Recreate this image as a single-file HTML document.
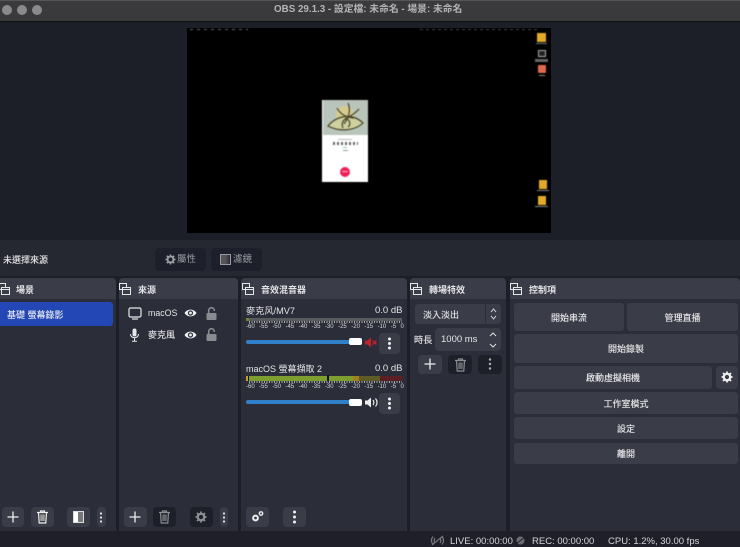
<!DOCTYPE html>
<html><head><meta charset="utf-8">
<style>
*{box-sizing:border-box}
html,body{margin:0;padding:0;width:740px;height:547px;overflow:hidden;background:#1c1e28}
body{position:relative;font-family:"Liberation Sans","Noto Sans CJK TC",sans-serif;color:#e4e4e6}
#w{position:absolute;left:0;top:0;width:740px;height:547px;overflow:hidden;filter:blur(0.35px)}
.a{position:absolute}
.t{position:absolute;white-space:nowrap;line-height:14px}
.m{text-shadow:0 0 .5px #dcdcdf}
.dock{position:absolute;top:278px;height:253px;background:#2b2d38;border-radius:4px 4px 0 0}
.hd{position:absolute;left:0;right:0;top:0;height:21px;background:#3a3c47;border-radius:4px 4px 0 0}
.ht{position:absolute;top:5px;font-size:9px;font-weight:bold;line-height:14px;color:#e2e2e5;white-space:nowrap}
.btn{position:absolute;background:#3a3c47;border-radius:3px;text-align:center;font-size:9px;color:#e4e4e6;text-shadow:0 0 .5px #e4e4e6}
.ib{position:absolute;background:#3a3c47;border-radius:4px}
.ibd{position:absolute;background:#1e2029;border-radius:4px}
svg{position:absolute;display:block;overflow:visible}
.scale{position:absolute;left:246px;width:158px;display:flex;justify-content:space-between;font-size:6px;color:#d8d8da;line-height:8px}
.pv{filter:blur(0.6px)}
</style></head>
<body><div id="w">
<!-- title bar -->
<div class="a" style="left:0;top:0;width:740px;height:21px;background:#3a3a3d;border-top:1px solid #555"></div>
<div class="a" style="left:0;top:21px;width:740px;height:1px;background:#0f1014"></div>
<div class="a" style="left:2px;top:5px;width:10px;height:10px;border-radius:50%;background:#8a8a8c"></div>
<div class="a" style="left:17px;top:5px;width:10px;height:10px;border-radius:50%;background:#8a8a8c"></div>
<div class="a" style="left:32px;top:5px;width:10px;height:10px;border-radius:50%;background:#8a8a8c"></div>
<div class="t" style="left:274px;top:3px;font-size:9.8px;font-weight:bold;color:#b4b4b6">OBS 29.1.3 - 設定檔: 未命名 - 場景: 未命名</div>

<!-- preview -->
<div class="a" style="left:187px;top:28px;width:364px;height:205px;background:#000"></div>
<div class="pv">
<div class="a" style="left:190px;top:29px;width:58px;height:1px;background:repeating-linear-gradient(90deg,#666 0 3px,#000 3px 7px)"></div>
<div class="a" style="left:420px;top:29px;width:118px;height:1px;background:repeating-linear-gradient(90deg,#444 0 3px,#000 3px 6px)"></div>
<div class="a" style="left:537px;top:33px;width:9px;height:9px;background:#e2a92a"></div>
<div class="a" style="left:536px;top:43px;width:11px;height:1px;background:#777"></div>
<div class="a" style="left:538px;top:50px;width:8px;height:7px;border:1px solid #aaa;background:#222"></div>
<div class="a" style="left:535px;top:59px;width:13px;height:3px;background:#666"></div>
<div class="a" style="left:538px;top:65px;width:8px;height:8px;background:#e0684c;border-radius:1px"></div>
<div class="a" style="left:539px;top:75px;width:6px;height:1px;background:#888"></div>
<div class="a" style="left:539px;top:180px;width:8px;height:9px;background:#e2a92a"></div>
<div class="a" style="left:537px;top:190px;width:12px;height:1px;background:#888"></div>
<div class="a" style="left:538px;top:196px;width:8px;height:9px;background:#e2a92a"></div>
<div class="a" style="left:535px;top:206px;width:13px;height:1px;background:#888"></div>
<!-- phone card -->
<div class="a" style="left:322px;top:100px;width:46px;height:82px;background:#fff"></div>
<div class="a" style="left:323px;top:100px;width:45px;height:35px;background:#b9c5ba"></div>
<svg style="left:323px;top:100px" width="45" height="35" viewBox="0 0 45 35">
<ellipse cx="22" cy="15" rx="9" ry="9" fill="#d4cb8f"/>
<path d="M5 26C14 15 30 13 40 23C32 31 16 32 5 26Z" fill="#cfd0a0" stroke="#47452a" stroke-width="1.2"/>
<path d="M25 3C28 10 26 17 21 24M14 8C17 14 24 18 31 18M36 9C32 14 27 16 22 19M20 28C18 24 20 19 24 19C28 21 27 26 25 27" fill="none" stroke="#47452a" stroke-width="1.2"/>
</svg>
<div class="a" style="left:338px;top:139px;width:14px;height:1px;background:#bbb"></div>
<div class="a" style="left:333px;top:142px;width:25px;height:3px;background:repeating-linear-gradient(90deg,#666 0 2px,#fff 2px 4px)"></div>
<div class="a" style="left:343px;top:147px;width:4px;height:1px;background:#8cc"></div>
<div class="a" style="left:343px;top:150px;width:5px;height:1px;background:#999"></div>
<div class="a" style="left:340px;top:167px;width:10px;height:10px;border-radius:50%;background:#ef1f56"></div>
<div class="a" style="left:342px;top:171px;width:6px;height:1px;background:#fbb;border-radius:1px"></div>
</div>

<!-- context bar -->
<div class="a" style="left:0;top:240px;width:740px;height:36px;background:#252731"></div>
<div class="t m" style="left:3px;top:253px;font-size:9px;color:#e2e2e5">未選擇來源</div>
<div class="ibd" style="left:155px;top:248px;width:51px;height:23px;background:#1d1f2a"></div>
<svg style="left:165px;top:254px" width="11" height="11" viewBox="0 0 24 24"><circle cx="12" cy="12" r="6.5" fill="none" stroke="#9a9ba1" stroke-width="4.5"/><path d="M12 1v4M12 19v4M1 12h4M19 12h4M4 4l3 3M17 17l3 3M20 4l-3 3M7 17l-3 3" stroke="#9a9ba1" stroke-width="3.5"/></svg>
<div class="t" style="left:177px;top:253px;font-size:9.5px;color:#9a9ba1">屬性</div>
<div class="ibd" style="left:211px;top:248px;width:51px;height:23px;background:#1d1f2a"></div>
<div class="a" style="left:220px;top:254px;width:11px;height:11px;border:1px solid #9a9ba1;background:linear-gradient(90deg,#555 0 50%,#2a2c35 100%)"></div>
<div class="t" style="left:233px;top:253px;font-size:9.5px;color:#9a9ba1">濾鏡</div>

<!-- Scenes dock -->
<div class="dock" style="left:-2px;width:118px">
 <div class="hd"></div>
 <svg style="left:0;top:5px" width="14" height="13" viewBox="0 0 14 13" fill="none" stroke="#e6e6e8" stroke-width="1"><rect x="0.5" y="0.5" width="7" height="6"/><rect x="3.5" y="4.5" width="8" height="7" fill="#3a3c47"/><path d="M3.5 6.5h8"/></svg>
 <div class="ht" style="left:18px">場景</div>
 <div class="a" style="left:0;top:24px;width:115px;height:24px;background:#2347b4;border-radius:3px"></div>
 <div class="t m" style="left:9px;top:30px;font-size:9px;color:#dfe4f6">基礎 螢幕錄影</div>
</div>
<div class="ib" style="left:2px;top:507px;width:22px;height:20px"></div>
<svg style="left:7px;top:511px" width="12" height="12" viewBox="0 0 12 12"><path d="M6 0.5v11M0.5 6h11" stroke="#eee" stroke-width="1.3"/></svg>
<div class="ib" style="left:31px;top:507px;width:23px;height:20px"></div>
<svg style="left:36px;top:510px" width="13" height="14" viewBox="0 0 13 14" fill="none" stroke="#eee" stroke-width="1.2"><path d="M1 2.5h11M4.5 2.5V1h4v1.5"/><path d="M2.5 2.5l.7 10.5h6.6l.7-10.5"/><rect x="4.2" y="4.5" width="4.6" height="6.5" fill="#999" stroke="none"/></svg>
<div class="ib" style="left:67px;top:507px;width:23px;height:20px"></div>
<div class="a" style="left:73px;top:511px;width:11px;height:12px;border:1px solid #ddd;background:linear-gradient(90deg,#fff 0 45%,#777 45%)"></div>
<div class="ib" style="left:97px;top:507px;width:9px;height:20px"></div>
<svg style="left:99px;top:512px" width="4" height="11" viewBox="0 0 4 11" fill="#e6e6e8"><circle cx="2" cy="1.5" r="1.1"/><circle cx="2" cy="5.5" r="1.1"/><circle cx="2" cy="9.5" r="1.1"/></svg>

<!-- Sources dock -->
<div class="dock" style="left:119px;width:119px">
 <div class="hd"></div>
 <svg style="left:0;top:5px" width="14" height="13" viewBox="0 0 14 13" fill="none" stroke="#e6e6e8" stroke-width="1"><rect x="0.5" y="0.5" width="7" height="6"/><rect x="3.5" y="4.5" width="8" height="7" fill="#3a3c47"/><path d="M3.5 6.5h8"/></svg>
 <div class="ht" style="left:19px">來源</div>
</div>
<svg style="left:128px;top:307px" width="14" height="13" viewBox="0 0 14 13" fill="none" stroke="#e8e8ea" stroke-width="1.2"><rect x="1" y="1" width="12" height="9" rx="1.5"/><path d="M4 12h6"/></svg>
<div class="t" style="left:148px;top:306px;font-size:8.8px;color:#e4e4e6">macOS</div>
<svg style="left:184px;top:308px" width="13" height="10" viewBox="0 0 13 10"><path d="M.5 5C3 .5 10 .5 12.5 5C10 9.5 3 9.5 .5 5Z" fill="#eee"/><circle cx="6.5" cy="5" r="2.6" fill="#2b2d38"/><circle cx="6.5" cy="5" r="1.4" fill="#eee"/></svg>
<svg style="left:206px;top:307px" width="11" height="13" viewBox="0 0 11 13"><path d="M2.7 6V3.5a2.8 2.8 0 0 1 5.6 0V4" fill="none" stroke="#8a8b90" stroke-width="1.6"/><rect x=".5" y="6" width="10" height="7" rx="1" fill="#8a8b90"/></svg>
<svg style="left:129px;top:328px" width="11" height="14" viewBox="0 0 11 14"><rect x="3.5" y="0.5" width="4" height="8" rx="2" fill="#e8e8ea"/><path d="M1.5 6c0 5 8 5 8 0M5.5 10v3M3 13.2h5" fill="none" stroke="#e8e8ea" stroke-width="1"/></svg>
<div class="t m" style="left:148px;top:328px;font-size:9px;color:#dcdcdf">麥克風</div>
<svg style="left:184px;top:330px" width="13" height="10" viewBox="0 0 13 10"><path d="M.5 5C3 .5 10 .5 12.5 5C10 9.5 3 9.5 .5 5Z" fill="#eee"/><circle cx="6.5" cy="5" r="2.6" fill="#2b2d38"/><circle cx="6.5" cy="5" r="1.4" fill="#eee"/></svg>
<svg style="left:206px;top:328px" width="11" height="13" viewBox="0 0 11 13"><path d="M2.7 6V3.5a2.8 2.8 0 0 1 5.6 0V4" fill="none" stroke="#8a8b90" stroke-width="1.6"/><rect x=".5" y="6" width="10" height="7" rx="1" fill="#8a8b90"/></svg>
<div class="ib" style="left:124px;top:507px;width:23px;height:20px"></div>
<svg style="left:129px;top:511px" width="12" height="12" viewBox="0 0 12 12"><path d="M6 0.5v11M0.5 6h11" stroke="#eee" stroke-width="1.3"/></svg>
<div class="ibd" style="left:153px;top:507px;width:23px;height:20px"></div>
<svg style="left:158px;top:510px" width="13" height="14" viewBox="0 0 13 14" fill="none" stroke="#8d8e94" stroke-width="1.2"><path d="M1 2.5h11M4.5 2.5V1h4v1.5"/><path d="M2.5 2.5l.7 10.5h6.6l.7-10.5"/><rect x="4.2" y="4.5" width="4.6" height="6.5" fill="#66676d" stroke="none"/></svg>
<div class="ibd" style="left:190px;top:507px;width:23px;height:20px"></div>
<svg style="left:195px;top:511px" width="12" height="12" viewBox="0 0 24 24"><circle cx="12" cy="12" r="6.5" fill="none" stroke="#8d8e94" stroke-width="4.5"/><path d="M12 1v4M12 19v4M1 12h4M19 12h4M4 4l3 3M17 17l3 3M20 4l-3 3M7 17l-3 3" stroke="#8d8e94" stroke-width="3.5"/></svg>
<div class="ib" style="left:220px;top:507px;width:8px;height:20px"></div>
<svg style="left:222px;top:512px" width="4" height="11" viewBox="0 0 4 11" fill="#e6e6e8"><circle cx="2" cy="1.5" r="1.1"/><circle cx="2" cy="5.5" r="1.1"/><circle cx="2" cy="9.5" r="1.1"/></svg>

<!-- Mixer dock -->
<div class="dock" style="left:241px;width:166px">
 <div class="hd"></div>
 <svg style="left:1px;top:5px" width="14" height="13" viewBox="0 0 14 13" fill="none" stroke="#e6e6e8" stroke-width="1"><rect x="0.5" y="0.5" width="7" height="6"/><rect x="3.5" y="4.5" width="8" height="7" fill="#3a3c47"/><path d="M3.5 6.5h8"/></svg>
 <div class="ht" style="left:20px">音效混音器</div>
</div>
<div class="t" style="left:246px;top:304px;font-size:9.2px;color:#e4e4e6">麥克风/MV7</div>
<div class="t" style="left:375px;top:304px;font-size:9.5px;color:#e4e4e6">0.0 dB</div>
<div class="a" style="left:246px;top:318px;width:156px;height:3px;background:#5a5b5e"></div>
<div class="a" style="left:246px;top:318px;width:3px;height:3px;background:#6a8a30"></div>
<div class="a" style="left:249px;top:321px;width:153px;height:2px;background:repeating-linear-gradient(90deg,#aaa 0 1px,transparent 1px 2.5px)"></div>
<div class="scale" style="top:323px"><span>-60</span><span>-55</span><span>-50</span><span>-45</span><span>-40</span><span>-35</span><span>-30</span><span>-25</span><span>-20</span><span>-15</span><span>-10</span><span>-5</span><span>0</span></div>
<div class="a" style="left:246px;top:340px;width:105px;height:4px;background:#2f7fc9;border-radius:2px"></div>
<div class="a" style="left:349px;top:338px;width:13px;height:7px;background:#fff;border-radius:2px"></div>
<svg style="left:365px;top:337px" width="12" height="11" viewBox="0 0 12 11"><path d="M0 3.5h2.5L6 .5v10L2.5 7.5H0Z" fill="#c4222a"/><path d="M7.5 3.5l4 4M11.5 3.5l-4 4" stroke="#c4222a" stroke-width="1.4"/></svg>
<div class="ib" style="left:379px;top:333px;width:21px;height:21px"></div>
<svg style="left:387px;top:337px" width="5" height="13" viewBox="0 0 5 13" fill="#f0f0f0"><circle cx="2.5" cy="2" r="1.5"/><circle cx="2.5" cy="6.5" r="1.5"/><circle cx="2.5" cy="11" r="1.5"/></svg>

<div class="t" style="left:246px;top:362px;font-size:9px;color:#e4e4e6">macOS 螢幕擷取 2</div>
<div class="t" style="left:375px;top:362px;font-size:9.5px;color:#e4e4e6">0.0 dB</div>
<div class="a" style="left:246px;top:376px;width:156px;height:5px;background:#5c1f24"></div>
<div class="a" style="left:246px;top:376px;width:134px;height:5px;background:#5f5c26"></div>
<div class="a" style="left:246px;top:376px;width:107px;height:5px;background:#7e9e2e"></div>
<div class="a" style="left:353px;top:376px;width:6px;height:5px;background:#a0801e"></div>
<div class="a" style="left:246px;top:376px;width:2px;height:5px;background:#c8a020"></div>
<div class="a" style="left:248px;top:376px;width:1px;height:5px;background:#111"></div>
<div class="a" style="left:327px;top:375px;width:2px;height:6px;background:#111"></div>
<div class="a" style="left:249px;top:381px;width:153px;height:2px;background:repeating-linear-gradient(90deg,#aaa 0 1px,transparent 1px 2.5px)"></div>
<div class="scale" style="top:383px"><span>-60</span><span>-55</span><span>-50</span><span>-45</span><span>-40</span><span>-35</span><span>-30</span><span>-25</span><span>-20</span><span>-15</span><span>-10</span><span>-5</span><span>0</span></div>
<div class="a" style="left:246px;top:400px;width:105px;height:4px;background:#2f7fc9;border-radius:2px"></div>
<div class="a" style="left:349px;top:399px;width:13px;height:7px;background:#fff;border-radius:2px"></div>
<svg style="left:365px;top:397px" width="13" height="11" viewBox="0 0 13 11"><path d="M0 3.5h2.5L6 .5v10L2.5 7.5H0Z" fill="#eee"/><path d="M8 3c1 1.5 1 3.5 0 5M10.5 1.5c2 2.5 2 5.5 0 8" fill="none" stroke="#eee" stroke-width="1.2"/></svg>
<div class="ib" style="left:379px;top:393px;width:21px;height:21px"></div>
<svg style="left:387px;top:397px" width="5" height="13" viewBox="0 0 5 13" fill="#f0f0f0"><circle cx="2.5" cy="2" r="1.5"/><circle cx="2.5" cy="6.5" r="1.5"/><circle cx="2.5" cy="11" r="1.5"/></svg>
<div class="ib" style="left:246px;top:507px;width:23px;height:20px"></div>
<svg style="left:251px;top:510px" width="13" height="13" viewBox="0 0 13 13" fill="none" stroke="#eee"><circle cx="4.5" cy="8" r="2.4" stroke-width="2"/><circle cx="10" cy="3.5" r="1.7" stroke-width="1.4"/></svg>
<div class="ib" style="left:283px;top:507px;width:23px;height:20px"></div>
<svg style="left:292px;top:510px" width="5" height="14" viewBox="0 0 5 14" fill="#f0f0f0"><circle cx="2.5" cy="2" r="1.5"/><circle cx="2.5" cy="7" r="1.5"/><circle cx="2.5" cy="12" r="1.5"/></svg>

<!-- Transitions dock -->
<div class="dock" style="left:410px;width:96px">
 <div class="hd"></div>
 <svg style="left:0;top:5px" width="14" height="13" viewBox="0 0 14 13" fill="none" stroke="#e6e6e8" stroke-width="1"><rect x="0.5" y="0.5" width="7" height="6"/><rect x="3.5" y="4.5" width="8" height="7" fill="#3a3c47"/><path d="M3.5 6.5h8"/></svg>
 <div class="ht" style="left:19px">轉場特效</div>
</div>
<div class="ib" style="left:415px;top:304px;width:70px;height:20px;border-radius:3px 0 0 3px"></div>
<div class="ib" style="left:486px;top:304px;width:15px;height:20px;border-radius:0 3px 3px 0"></div>
<div class="t m" style="left:423px;top:308px;font-size:9px;color:#dcdcdf">淡入淡出</div>
<svg style="left:490px;top:308px" width="7" height="12" viewBox="0 0 7 12" fill="none" stroke="#ccc" stroke-width="1"><path d="M1 4l2.5-3L6 4M1 8l2.5 3L6 8"/></svg>
<div class="t m" style="left:414px;top:333px;font-size:9.2px;color:#dcdcdf">時長</div>
<div class="ib" style="left:435px;top:328px;width:66px;height:23px"></div>
<div class="t" style="left:441px;top:333px;font-size:9.5px;color:#e4e4e6">1000 ms</div>
<svg style="left:489px;top:332px" width="8" height="16" viewBox="0 0 8 16" fill="none" stroke="#ddd" stroke-width="1"><path d="M1 4l3-3 3 3M1 12l3 3 3-3"/></svg>
<div class="ib" style="left:418px;top:355px;width:24px;height:19px"></div>
<svg style="left:424px;top:358px" width="12" height="12" viewBox="0 0 12 12"><path d="M6 .5v11M.5 6h11" stroke="#eee" stroke-width="1.3"/></svg>
<div class="ibd" style="left:448px;top:355px;width:24px;height:19px"></div>
<svg style="left:454px;top:358px" width="13" height="14" viewBox="0 0 13 14" fill="none" stroke="#8d8e94" stroke-width="1.2"><path d="M1 2.5h11M4.5 2.5V1h4v1.5"/><path d="M2.5 2.5l.7 10.5h6.6l.7-10.5"/><rect x="4.2" y="4.5" width="4.6" height="6.5" fill="#66676d" stroke="none"/></svg>
<div class="ibd" style="left:478px;top:355px;width:24px;height:19px"></div>
<svg style="left:488px;top:358px" width="4" height="12" viewBox="0 0 4 12" fill="#b0b1b6"><circle cx="2" cy="1.5" r="1.2"/><circle cx="2" cy="6" r="1.2"/><circle cx="2" cy="10.5" r="1.2"/></svg>

<!-- Controls dock -->
<div class="dock" style="left:510px;width:230px">
 <div class="hd"></div>
 <svg style="left:0;top:5px" width="14" height="13" viewBox="0 0 14 13" fill="none" stroke="#e6e6e8" stroke-width="1"><rect x="0.5" y="0.5" width="7" height="6"/><rect x="3.5" y="4.5" width="8" height="7" fill="#3a3c47"/><path d="M3.5 6.5h8"/></svg>
 <div class="ht" style="left:19px">控制項</div>
</div>
<div class="btn" style="left:514px;top:303px;width:110px;height:28px;line-height:31px">開始串流</div>
<div class="btn" style="left:627px;top:303px;width:111px;height:28px;line-height:31px">管理直播</div>
<div class="btn" style="left:514px;top:334px;width:224px;height:29px;line-height:31px">開始錄製</div>
<div class="btn" style="left:514px;top:366px;width:198px;height:23px;line-height:25px">啟動虛擬相機</div>
<div class="ib" style="left:716px;top:366px;width:22px;height:23px"></div>
<svg style="left:721px;top:371px" width="12" height="12" viewBox="0 0 24 24"><circle cx="12" cy="12" r="6.5" fill="none" stroke="#f0f0f0" stroke-width="4.5"/><path d="M12 1v4M12 19v4M1 12h4M19 12h4M4 4l3 3M17 17l3 3M20 4l-3 3M7 17l-3 3" stroke="#f0f0f0" stroke-width="3.5"/></svg>
<div class="btn" style="left:514px;top:392px;width:224px;height:22px;line-height:24px">工作室模式</div>
<div class="btn" style="left:514px;top:417px;width:224px;height:22px;line-height:24px">設定</div>
<div class="btn" style="left:514px;top:443px;width:224px;height:21px;line-height:22px">離開</div>

<!-- status bar -->
<div class="a" style="left:0;top:531px;width:740px;height:16px;background:#1e1f29"></div>
<svg style="left:430px;top:535px" width="15" height="11" viewBox="0 0 15 11" fill="none" stroke="#77787d" stroke-width="1.2"><path d="M3 1.5c-2 2.5-2 5.5 0 8M12 1.5c2 2.5 2 5.5 0 8M5 3c-1 1.5-1 3.5 0 5M10 3c1 1.5 1 3.5 0 5M2 10L13 1"/></svg>
<div class="t" style="left:450px;top:535px;font-size:9.5px;color:#d6d6d8">LIVE: 00:00:00</div>
<svg style="left:516px;top:536px" width="9" height="9" viewBox="0 0 9 9"><circle cx="4.5" cy="4.5" r="4" fill="#6c6d72"/><path d="M0 8L9 1" stroke="#1e1f29" stroke-width="1"/></svg>
<div class="t" style="left:532px;top:535px;font-size:9.5px;color:#d6d6d8">REC: 00:00:00</div>
<div class="t" style="left:608px;top:535px;font-size:9.5px;color:#d6d6d8">CPU: 1.2%, 30.00 fps</div>
</div></body></html>
